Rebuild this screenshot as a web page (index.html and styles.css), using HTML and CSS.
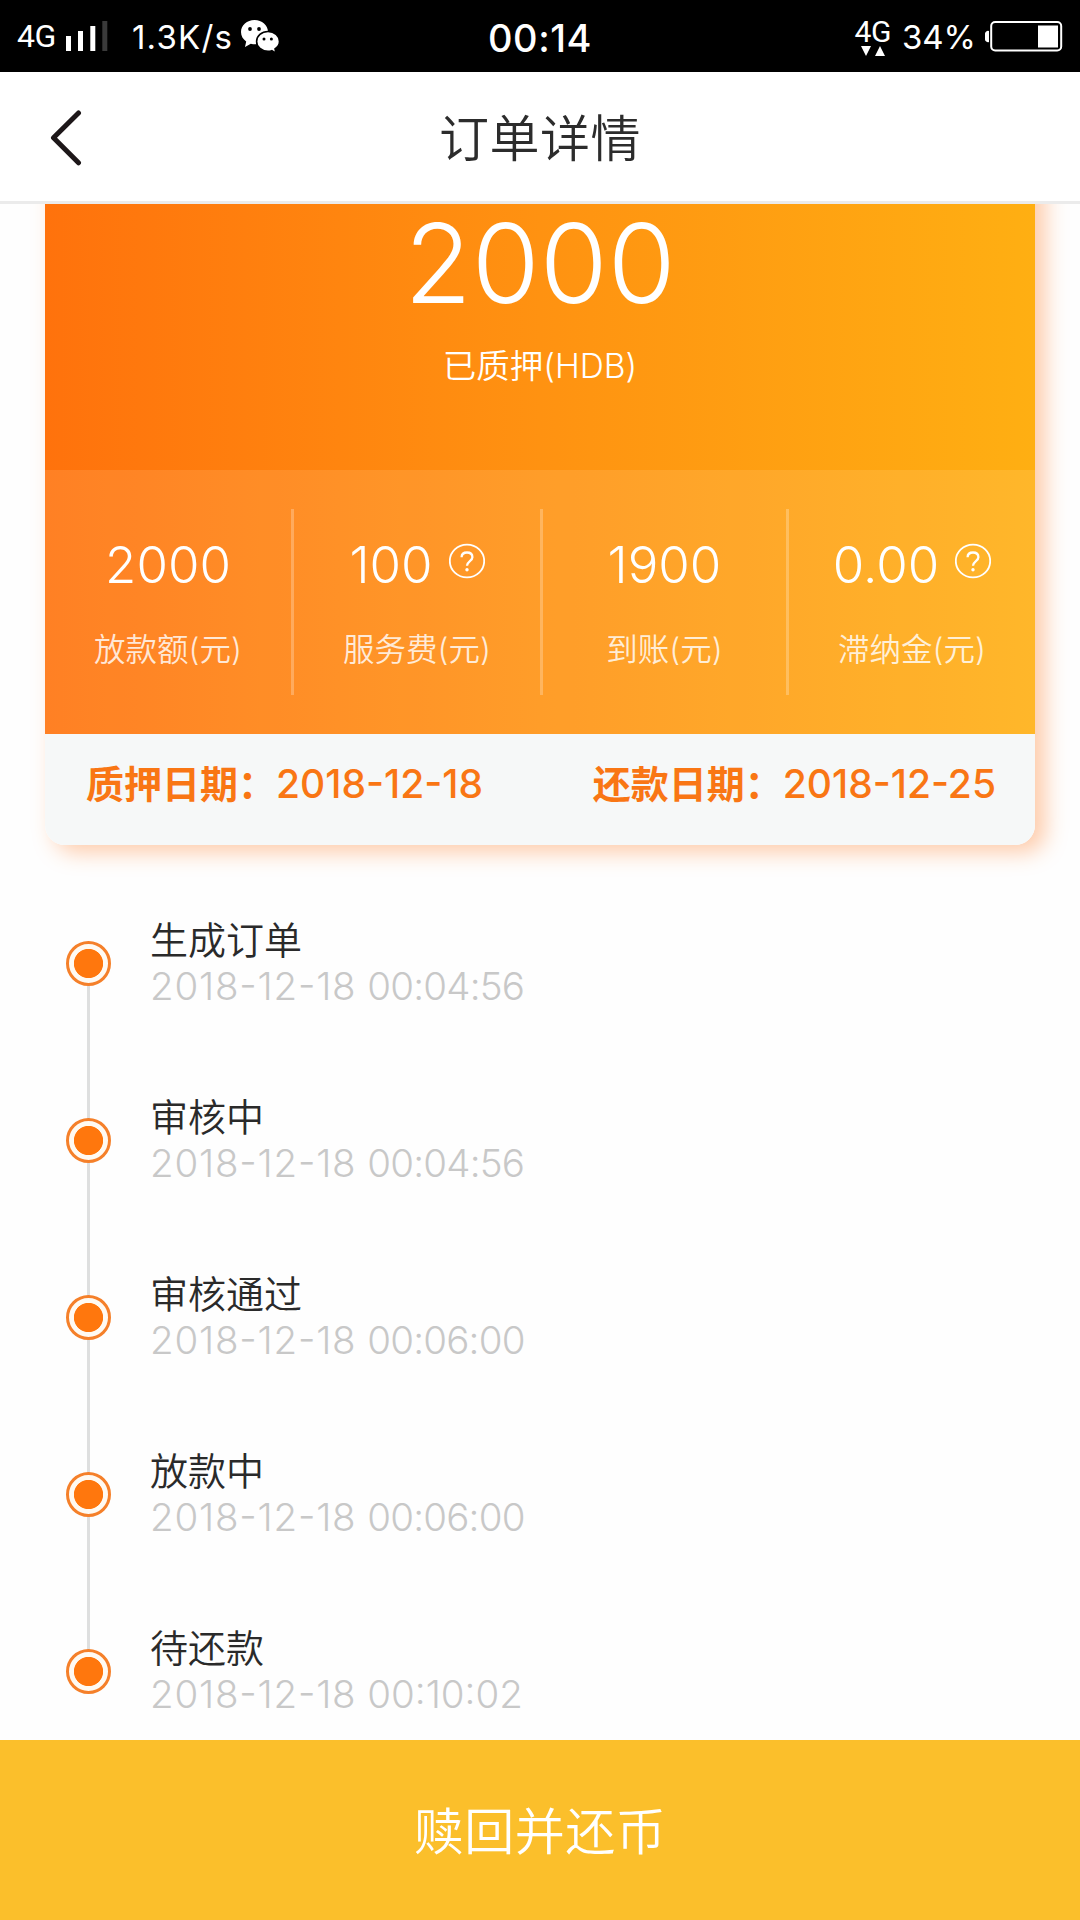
FILE: index.html
```html
<!DOCTYPE html>
<html lang="zh-CN">
<head>
<meta charset="utf-8">
<title>订单详情</title>
<link rel="stylesheet" href="styles.css">
</head>
<body>
<div class="screen">
  <div class="status">
    <div class="status-left">
      <span class="net">4G</span>
      <svg class="signal" width="42" height="30" viewBox="0 0 42 30"><g fill="#fff"><rect x="0" y="15" width="5" height="15"/><rect x="12" y="10" width="5" height="20"/><rect x="24.300" y="5" width="5" height="25"/></g><rect x="36.300" y="0" width="5" height="30" fill="#3a3a3a"/></svg>
      <span class="speed">1.3K/s</span>
      <svg class="wechat" width="39" height="34" viewBox="0 0 39 34">
        <path fill="#fff" d="M13.500 0C6 0 0 5.200 0 12c0 4 2 7.200 5.200 9.500L4 27l5.800-3.300c1.500.4 2.900.5 4.700.5C19 24 27 20 27 12 27 5.200 21 0 13.500 0z"/>
        <path fill="#fff" stroke="#000" stroke-width="1.600" d="M27 11.500c-6.400 0-11.400 4.400-11.400 9.900S20.600 31.300 27 31.300c1.400 0 2.600-.2 3.800-.6l4.200 2.600-1-4.400c2.800-2 4.500-4.400 4.500-7.500 0-5.500-5-9.900-11.500-9.900z"/>
        <g fill="#000"><circle cx="9" cy="9" r="1.900"/><circle cx="18" cy="9" r="1.900"/><circle cx="23" cy="19" r="1.500"/><circle cx="30.400" cy="19" r="1.500"/></g>
      </svg>
    </div>
    <span class="time">00:14</span>
    <div class="status-right">
      <div class="data">
        <span class="net-small">4G</span>
        <svg width="24" height="10" viewBox="0 0 24 10"><path fill="#fff" d="M0 0h10L5 10zM14 10h10L19 0z"/></svg>
      </div>
      <span class="percent">34%</span>
      <svg class="battery" width="78" height="31" viewBox="0 0 78 31"><path fill="#fff" d="M4 10v11a3 3 0 0 1-4-3v-5a3 3 0 0 1 4-3z"/><rect x="6.200" y="1" width="70" height="28.500" rx="4" fill="none" stroke="#fff" stroke-width="2"/><rect x="53" y="4.500" width="20" height="22" fill="#fff"/></svg>
    </div>
  </div>

  <header class="nav">
    <svg class="back" width="32" height="58" viewBox="0 0 32 58"><path d="M28.500 4 3.500 28.800l25 25" fill="none" stroke="#1d1719" stroke-width="5" stroke-linecap="round" stroke-linejoin="round"/></svg>
    <h1 class="nav-title">订单详情</h1>
  </header>

  <main class="content">
    <section class="card">
      <div class="card-main">
        <div class="hero">
          <div class="amount">2000</div>
          <div class="amount-label">已质押(HDB)</div>
        </div>
        <div class="stats">
          <div class="stat"><div class="value">2000</div><div class="label">放款额(元)</div></div>
          <div class="stat"><div class="value">100<svg class="help" width="36" height="36" viewBox="0 0 36 36"><ellipse cx="18" cy="18" rx="17.200" ry="16.400"/><path class="help-mark" d="M12.600 14.300c0-3 2.200-4.800 5.400-4.800s5.400 1.800 5.400 4.700c0 3.800-5.400 4-5.400 8.600"/><circle class="help-dot" cx="18" cy="26.800" r="1.700"/></svg></div><div class="label">服务费(元)</div></div>
          <div class="stat"><div class="value">1900</div><div class="label">到账(元)</div></div>
          <div class="stat"><div class="value">0.00<svg class="help" width="36" height="36" viewBox="0 0 36 36"><ellipse cx="18" cy="18" rx="17.200" ry="16.400"/><path class="help-mark" d="M12.600 14.300c0-3 2.200-4.800 5.400-4.800s5.400 1.800 5.400 4.700c0 3.800-5.400 4-5.400 8.600"/><circle class="help-dot" cx="18" cy="26.800" r="1.700"/></svg></div><div class="label">滞纳金(元)</div></div>
        </div>
      </div>
      <div class="dates">
        <div class="date"><span class="date-name">质押日期：</span><span class="date-value">2018-12-18</span></div>
        <div class="date"><span class="date-name">还款日期：</span><span class="date-value">2018-12-25</span></div>
      </div>
    </section>

    <ol class="timeline">
      <li class="step"><div class="track"><i class="dot"></i></div><div><div class="step-name">生成订单</div><div class="step-time"><span class="day">2018-12-18</span> <span class="clock">00:04:56</span></div></div></li>
      <li class="step"><div class="track"><i class="dot"></i></div><div><div class="step-name">审核中</div><div class="step-time"><span class="day">2018-12-18</span> <span class="clock">00:04:56</span></div></div></li>
      <li class="step"><div class="track"><i class="dot"></i></div><div><div class="step-name">审核通过</div><div class="step-time"><span class="day">2018-12-18</span> <span class="clock">00:06:00</span></div></div></li>
      <li class="step"><div class="track"><i class="dot"></i></div><div><div class="step-name">放款中</div><div class="step-time"><span class="day">2018-12-18</span> <span class="clock">00:06:00</span></div></div></li>
      <li class="step"><div class="track"><i class="dot"></i></div><div><div class="step-name">待还款</div><div class="step-time"><span class="day">2018-12-18</span> <span class="clock">00:10:02</span></div></div></li>
    </ol>
  </main>

  <button class="submit">赎回并还币</button>
</div>
</body>
</html>
```
FILE: styles.css
```css
* { box-sizing: border-box; margin: 0; padding: 0; }

body {
  background: #fefefe;
  font-family: Inter, "Noto Sans CJK SC", sans-serif;
  font-weight: 350;
}

.screen {
  width: 1080px;
  height: 1920px;
  display: flex;
  flex-direction: column;
  overflow: hidden;
}

/* Status bar */
.status {
  height: 72px;
  flex: none;
  display: grid;
  grid-template-columns: 1fr auto 1fr;
  background: #000;
  color: #fff;
  font-weight: 400;
  line-height: 72px;
}
.status-left, .status-right { display: flex; align-items: flex-start; }
.status-left { padding-left: 17px; }
.status-right { justify-content: flex-end; padding-right: 17px; }
.net { width: 49px; font: 400 32px/72px Roboto, sans-serif; letter-spacing: -0.500px; }
.signal { margin-top: 21px; }
.speed { width: 109px; margin-left: 24px; font-size: 33px; line-height: 75px; letter-spacing: 1.200px; }
.wechat { margin-top: 20px; }
.time { font-size: 38px; font-weight: 450; line-height: 76px; letter-spacing: 0.500px; }
.data { display: flex; flex-direction: column; align-items: center; margin-right: 11px; }
.net-small { height: 46px; font: 400 30px/63px Roboto, sans-serif; letter-spacing: -0.500px; }
.percent { font-size: 33px; line-height: 74px; margin-right: 9px; }
.battery { margin-top: 20.500px; }

/* Title bar */
.nav {
  height: 132px;
  flex: none;
  display: grid;
  grid-template-columns: 1fr auto 1fr;
  border-bottom: 3px solid #ebebeb;
  background: #fff;
}
.back { margin: 37px 0 0 50px; }
.nav-title {
  font-size: 50px;
  font-weight: 350;
  letter-spacing: 0.500px;
  line-height: 135px;
  height: 129px;
  color: #2c2c2c;
}

/* Scrolled content */
.content { flex: 1; min-height: 0; overflow: hidden; }

.card {
  margin: -40px 45px 0;
  border-radius: 0 0 20px 20px;
  box-shadow: 10px 7px 22px rgba(255, 125, 40, 0.4);
}
.card-main { background: linear-gradient(90deg, #ff720c, #ff9211 50%, #ffaf12); color: #fff; }
.hero { height: 306px; padding-top: 44px; text-align: center; }
.amount { font-size: 110px; line-height: 110px; }
.amount-label { margin-top: 28px; font-size: 33.500px; line-height: 40px; }
.stats {
  display: grid;
  grid-template-columns: 246px 249px 246px 1fr;
  height: 264px;
  padding: 39px 0;
  background: rgba(255, 255, 255, 0.1);
}
.stat { padding-top: 26px; text-align: center; }
.stat + .stat { border-left: 3px solid rgba(255, 255, 255, 0.25); }
.value {
  display: flex;
  justify-content: center;
  font-size: 51px;
  line-height: 60px;
}
.help {
  margin: 8px 0 0 16px;
  fill: none;
  stroke: #fff;
  stroke-width: 1.800;
}
.help-mark { stroke-width: 2.300; }
.help-dot { fill: #fff; stroke: none; }
.label { margin-top: 34px; font-size: 31.500px; line-height: 42px; color: rgba(255, 255, 255, 0.82); }

.dates {
  display: flex;
  justify-content: space-between;
  height: 111px;
  padding: 0 39px 0 41px;
  border-radius: 0 0 20px 20px;
  background: #f6f8f8;
  color: #f97614;
  line-height: 100px;
}
.date { display: flex; }
.date-name { font-size: 38px; font-weight: 700; }
.date-value { font-size: 39px; font-weight: 550; font-feature-settings: "case"; }

/* Timeline */
.timeline { list-style: none; padding: 69px 0 0 66px; }
.step { display: flex; height: 177px; gap: 39px; }
.track { width: 45px; padding-top: 27px; background: linear-gradient(#dedfdf, #dedfdf) 21px 50px / 3px 100% no-repeat; }
.step + .step .track { background-position: 21px 0; }
.step:last-child .track { background-size: 3px 40px; }
.dot {
  display: block;
  width: 45px;
  height: 45px;
  border: 3px solid #f5802a;
  border-radius: 50%;
  background: radial-gradient(circle, #ff770d 14.200px, #fffaf2 15px);
}
.step-name { font-size: 38px; line-height: 52px; color: #2a2a2a; }
.step-time { font-size: 38.500px; font-weight: 300; line-height: 40px; color: #c8c8c8; }
.day { letter-spacing: 0.800px; font-feature-settings: "case"; }
.clock { letter-spacing: -0.800px; }
.step:last-child .clock { letter-spacing: 0; }

.submit {
  height: 180px;
  flex: none;
  padding-bottom: 5px;
  border: 0;
  background: #fbbf2b;
  color: #fff;
  font: inherit;
  font-size: 50px;
  letter-spacing: 0.500px;
}
```
